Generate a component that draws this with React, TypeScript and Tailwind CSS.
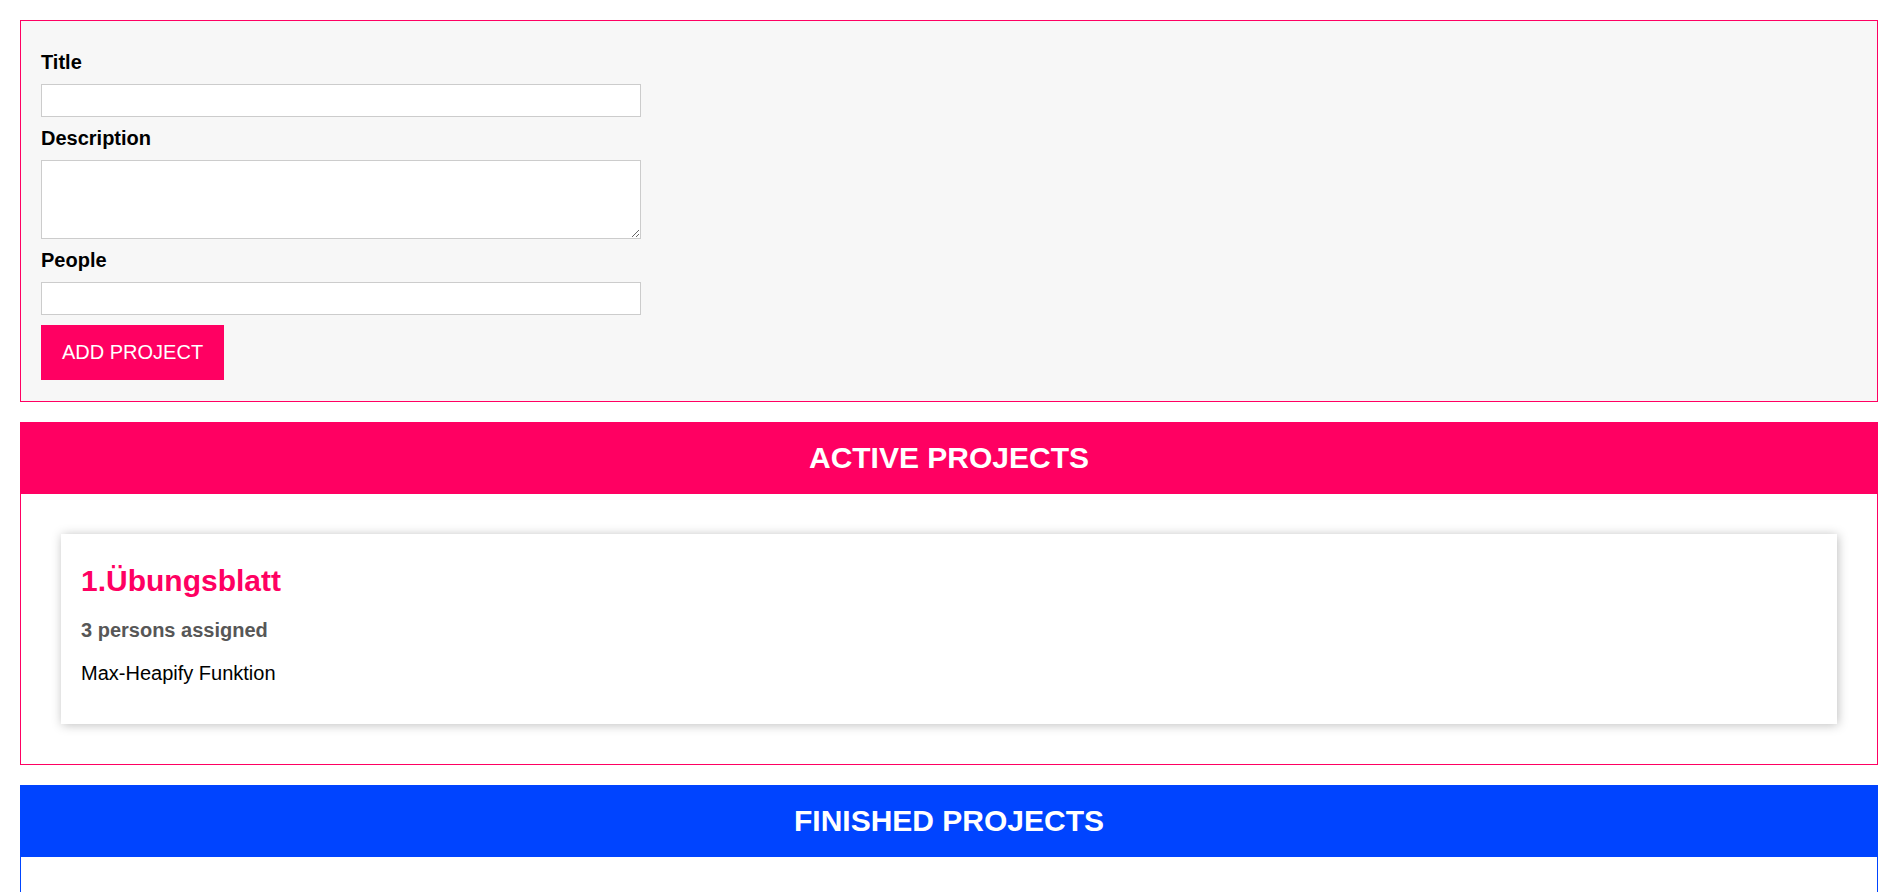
import React from "react";

export default function App() {
  return (
    <div className="min-h-screen bg-white font-['Liberation_Sans',Arial,sans-serif] text-black">
      <div className="flex flex-col gap-[20px] pt-[20px] pb-[20px] pl-[20px] pr-[18px]">
        <div className="border border-[#ff0062] bg-[#f7f7f7] px-[20px] pt-[30px] pb-[21px]">
          <form className="flex flex-col gap-[10px]" onSubmit={(e) => e.preventDefault()}>
            <label htmlFor="title" className="block text-[20px] font-bold leading-[23px]">
              Title
            </label>
            <input
              id="title"
              type="text"
              className="block h-[33px] w-full max-w-[600px] border border-[#cccccc] bg-white px-[8px] py-[4px] text-[20px] leading-[23px] outline-none"
            />
            <label htmlFor="description" className="block text-[20px] font-bold leading-[23px]">
              Description
            </label>
            <textarea
              id="description"
              rows={3}
              className="block h-[79px] w-full max-w-[600px] border border-[#cccccc] bg-white px-[8px] py-[4px] text-[20px] leading-[23px] outline-none"
            />
            <label htmlFor="people" className="block text-[20px] font-bold leading-[23px]">
              People
            </label>
            <input
              id="people"
              type="number"
              className="block h-[33px] w-full max-w-[600px] border border-[#cccccc] bg-white px-[8px] py-[4px] text-[20px] leading-[23px] outline-none"
            />
            <button
              type="submit"
              className="self-start border border-[#ff0062] bg-[#ff0062] px-[20px] py-[15px] text-[20px] leading-[23px] text-white"
            >
              ADD PROJECT
            </button>
          </form>
        </div>

        <section className="border border-[#ff0062]">
          <header className="flex h-[71px] items-center justify-center bg-[#ff0062]">
            <h2 className="text-[30px] font-bold leading-[34.5px] text-white">ACTIVE PROJECTS</h2>
          </header>
          <ul className="flex list-none flex-col p-[40px]">
            <li className="flex flex-col gap-[20px] bg-white px-[20px] pt-[30px] pb-[39px] shadow-[1.25px_1.25px_10px_rgba(0,0,0,0.26)]">
              <h2 className="text-[30px] font-bold leading-[34.5px] text-[#ff0062]">1.Übungsblatt</h2>
              <h3 className="text-[20px] font-bold leading-[23px] text-[#575757]">3 persons assigned</h3>
              <p className="text-[20px] leading-[23px]">Max-Heapify Funktion</p>
            </li>
          </ul>
        </section>

        <section className="border border-[#0044ff]">
          <header className="flex h-[71px] items-center justify-center bg-[#0044ff]">
            <h2 className="text-[30px] font-bold leading-[34.5px] text-white">FINISHED PROJECTS</h2>
          </header>
          <ul className="list-none p-[20px]"></ul>
        </section>
      </div>
    </div>
  );
}
